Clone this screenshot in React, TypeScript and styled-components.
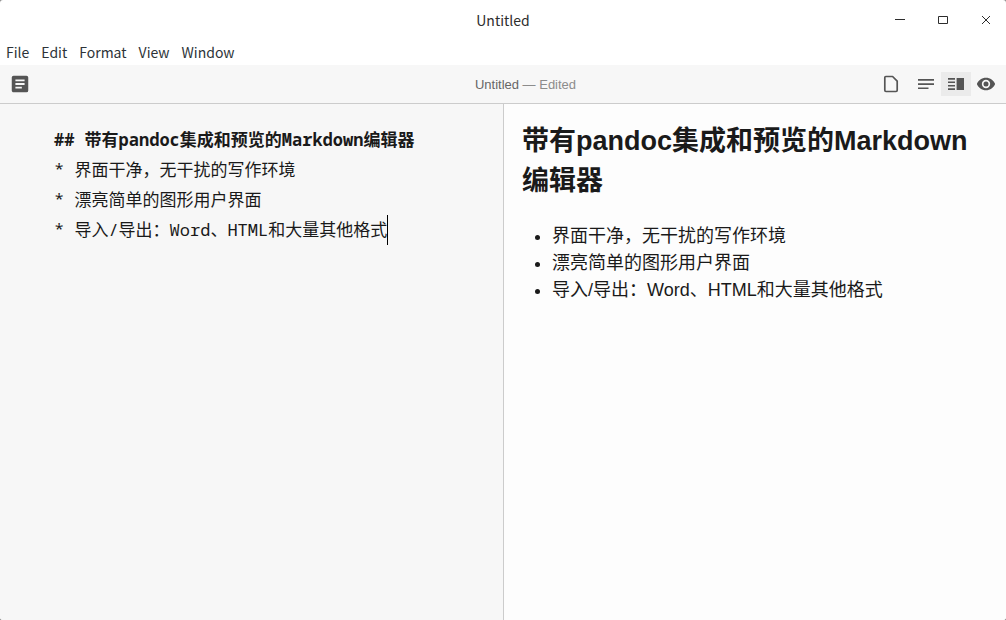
import React from "react";
import styled, { createGlobalStyle } from "styled-components";

const Global = createGlobalStyle`
  * { box-sizing: border-box; }
  html, body { margin: 0; background: #8c8c8c; }
`;

const uiFont = `"Noto Sans CJK SC", "Noto Sans", sans-serif`;
const bodyFont = `"Liberation Sans", "Noto Sans CJK SC", sans-serif`;
const monoFont = `"Noto Sans Mono", "DejaVu Sans Mono", "Noto Sans CJK SC", monospace`;

const Window = styled.div`
  display: flex;
  flex-direction: column;
  min-height: 100vh;
  border-radius: 3px;
  overflow: hidden;
  background: #ffffff;
  color: #1a1a1a;
`;

const TitleBar = styled.header`
  display: grid;
  grid-template-columns: 1fr auto 1fr;
  align-items: center;
  height: 40px;
  font: 14px/24px ${uiFont};
`;

const WindowTitle = styled.span`
  grid-column: 2;
  color: #2d2d2d;
`;

const WindowControls = styled.div`
  display: flex;
  justify-content: flex-end;
  gap: 27px;
  padding-right: 12px;
`;

const ControlButton = styled.button`
  display: flex;
  width: 16px;
  height: 16px;
  padding: 0;
  border: 0;
  background: none;
  color: #2d2d2d;
`;

const MenuBar = styled.nav`
  display: flex;
  align-items: center;
  gap: 12px;
  height: 25px;
  padding: 0 6px 2px;
  font: 14px/24px ${uiFont};
`;

const MenuButton = styled.button`
  padding: 0;
  border: 0;
  background: none;
  color: #2d3338;
  font: inherit;
`;

const Toolbar = styled.div`
  display: grid;
  grid-template-columns: 1fr auto 1fr;
  align-items: center;
  height: 39px;
  padding: 0 5px;
  border-bottom: 1px solid #cccccc;
  background: #f7f7f7;
`;

const ToolGroup = styled.div<{ $end?: boolean }>`
  display: flex;
  justify-content: ${(p) => (p.$end ? "flex-end" : "flex-start")};
`;

const ToolButton = styled.button<{ $active?: boolean; $spaced?: boolean }>`
  display: flex;
  align-items: center;
  justify-content: center;
  width: 30px;
  height: 24px;
  margin-right: ${(p) => (p.$spaced ? "5px" : "0")};
  padding: 0;
  border: 0;
  background: ${(p) => (p.$active ? "#ebebeb" : "none")};
  color: #555555;
`;

const FileName = styled.div`
  padding: 2px 0 0 45px;
  color: #666666;
  font: 13px/22px ${bodyFont};
`;

const FileStatus = styled.span`
  color: #8c8c8c;
`;

const Panes = styled.main`
  display: grid;
  grid-template-columns: 1fr 1fr;
  flex: 1;
`;

const Editor = styled.div`
  padding: 21px 54px;
  background: #f7f7f7;
  font: 17px/30px ${monoFont};
  outline: none;
`;

const SourceLine = styled.div<{ $heading?: boolean }>`
  height: 30px;
  font-weight: ${(p) => (p.$heading ? 700 : 400)};
  white-space: pre;
`;

const Caret = styled.span`
  display: inline-block;
  width: 1px;
  height: 30px;
  background: #000000;
  vertical-align: top;
`;

const Preview = styled.article`
  padding: 17px 18px;
  border-left: 1px solid #cccccc;
  background: #fdfdfd;
  font: 18px/27px ${bodyFont};
`;

const Heading = styled.h2`
  margin: 0 0 22px;
  font-size: 27px;
  line-height: 40px;
`;

const List = styled.ul`
  margin: 0;
  padding-left: 30px;
`;

const DocIcon = () => (
  <svg width="22" height="22" viewBox="0 0 24 24" fill="currentColor">
    <path d="M19 3H5a2 2 0 0 0-2 2v14c0 1.100.9 2 2 2h14a2 2 0 0 0 2-2V5a2 2 0 0 0-2-2zm-5 14H7v-2h7v2zm3-4H7v-2h10v2zm0-4H7V7h10v2z" />
  </svg>
);

const PageIcon = () => (
  <svg width="20" height="20" viewBox="0 0 20 20" fill="none" stroke="currentColor" strokeWidth="1.7" strokeLinejoin="round">
    <path d="M4.800 2.500h6.800l4.600 4.600v9.200a1.200 1.200 0 0 1-1.200 1.200H5a1.200 1.200 0 0 1-1.200-1.200V3.500a1 1 0 0 1 1-1z" />
  </svg>
);

const LinesIcon = () => (
  <svg width="20" height="20" viewBox="0 0 20 20" fill="currentColor">
    <path d="M2 5h16v1.700H2zM2 9.200h16v1.700H2zM2 13.400h10.500v1.700H2z" />
  </svg>
);

const SplitIcon = () => (
  <svg width="20" height="20" viewBox="0 0 20 20" fill="currentColor">
    <path d="M2 4h7v1.700H2zM2 7.400h7v1.700H2zM2 10.900h7v1.700H2zM2 14.300h7V16H2zM10.600 4h7.400v12h-7.400z" />
  </svg>
);

const EyeIcon = () => (
  <svg width="20" height="20" viewBox="0 0 24 24" fill="currentColor">
    <path d="M12 4.500C7 4.500 2.730 7.610 1 12c1.730 4.390 6 7.500 11 7.500s9.270-3.110 11-7.500c-1.730-4.390-6-7.500-11-7.500zM12 17a5 5 0 1 1 0-10 5 5 0 0 1 0 10zm0-8a3 3 0 1 0 0 6 3 3 0 0 0 0-6z" />
  </svg>
);

const ControlIcon = ({ d }: { d: string }) => (
  <svg width="16" height="16" viewBox="0 0 16 16" fill="none" stroke="currentColor" strokeWidth="1">
    <path d={d} />
  </svg>
);

const menus = ["File", "Edit", "Format", "View", "Window"];
const controls = [
  { label: "Minimize", d: "M3 7.500h10" },
  { label: "Maximize", d: "M3.500 4.500h9v7h-9z" },
  { label: "Close", d: "M4 4l8 8M12 4l-8 8" },
];
const title = "带有pandoc集成和预览的Markdown编辑器";
const items = ["界面干净，无干扰的写作环境", "漂亮简单的图形用户界面", "导入/导出：Word、HTML和大量其他格式"];

export default function App() {
  return (
    <>
      <Global />
      <Window lang="zh-CN">
        <TitleBar>
          <WindowTitle>Untitled</WindowTitle>
          <WindowControls>
            {controls.map((c) => (
              <ControlButton key={c.label} aria-label={c.label}>
                <ControlIcon d={c.d} />
              </ControlButton>
            ))}
          </WindowControls>
        </TitleBar>
        <MenuBar>
          {menus.map((m) => (
            <MenuButton key={m}>{m}</MenuButton>
          ))}
        </MenuBar>
        <Toolbar>
          <ToolGroup>
            <ToolButton aria-label="Document"><DocIcon /></ToolButton>
          </ToolGroup>
          <FileName>Untitled <FileStatus>— Edited</FileStatus></FileName>
          <ToolGroup $end>
            <ToolButton $spaced aria-label="Page"><PageIcon /></ToolButton>
            <ToolButton aria-label="Editor only"><LinesIcon /></ToolButton>
            <ToolButton $active aria-label="Split view"><SplitIcon /></ToolButton>
            <ToolButton aria-label="Preview only"><EyeIcon /></ToolButton>
          </ToolGroup>
        </Toolbar>
        <Panes>
          <Editor role="textbox" aria-multiline="true" aria-label="Markdown source" contentEditable suppressContentEditableWarning spellCheck={false}>
            <SourceLine $heading>{`## ${title}`}</SourceLine>
            {items.map((item, i) => (
              <SourceLine key={item}>
                {`* ${item}`}
                {i === items.length - 1 && <Caret />}
              </SourceLine>
            ))}
          </Editor>
          <Preview>
            <Heading>{title}</Heading>
            <List>
              {items.map((item) => (
                <li key={item}>{item}</li>
              ))}
            </List>
          </Preview>
        </Panes>
      </Window>
    </>
  );
}
